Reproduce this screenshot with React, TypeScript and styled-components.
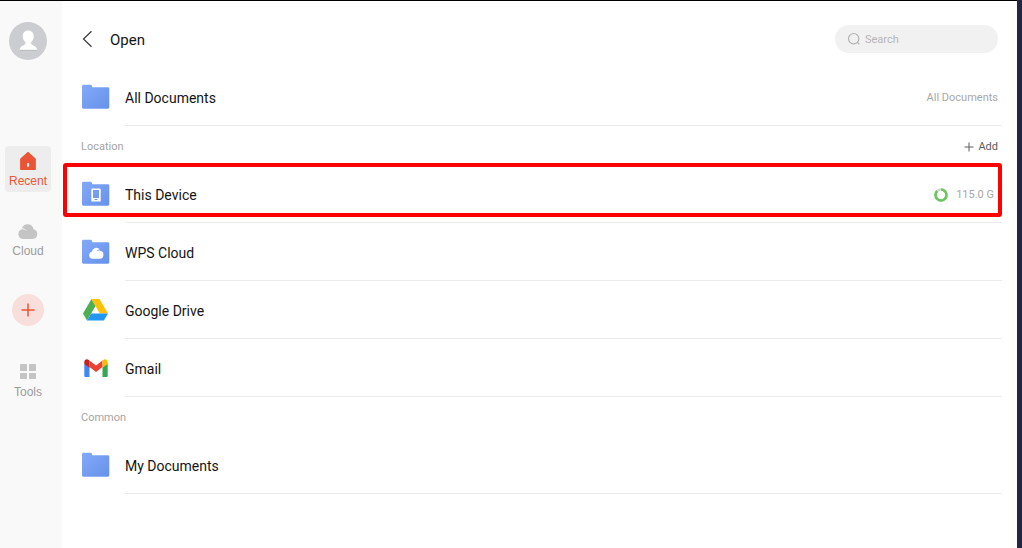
import React from "react";
import styled, { createGlobalStyle } from "styled-components";

const GlobalStyle = createGlobalStyle`
  *, *::before, *::after { box-sizing: border-box; }
  body {
    margin: 0;
    background: #fff;
    color: #141414;
    font-family: Roboto, "Liberation Sans", sans-serif;
    font-size: 14px;
  }
  button, input { font: inherit; color: inherit; }
  button { padding: 0; border: 0; background: none; cursor: pointer; }
  svg { display: block; flex: none; }
`;

const Frame = styled.div`
  min-height: 100vh;
  display: flex;
  border-right: 5px solid #202643;
  background: linear-gradient(#000, #000) top / 100% 1px no-repeat #fff;
  padding-top: 1px;
`;

const Sidebar = styled.nav`
  flex: none;
  width: 62px;
  padding: 21px 11px 0 5px;
  background: #f9f9f9;
  display: flex;
  flex-direction: column;
  align-items: center;
  gap: 24px;
`;

const Avatar = styled.button`
  width: 38px;
  height: 38px;
  margin-bottom: 62px;
`;

const NavItem = styled.button<{ $active?: boolean }>`
  width: 46px;
  height: 46px;
  padding-top: 2px;
  border-radius: 4px;
  display: flex;
  flex-direction: column;
  align-items: center;
  justify-content: center;
  gap: 2px;
  font-family: "Liberation Sans", sans-serif;
  font-size: 12px;
  line-height: 16px;
  background: ${(p) => (p.$active ? "#ededed" : "transparent")};
  color: ${(p) => (p.$active ? "#eb5537" : "#9c9c9c")};
`;

const CreateButton = styled.button`
  width: 32px;
  height: 32px;
  margin: 8px 0 7px;
  border-radius: 50%;
  background: #f8dfdb;
  display: grid;
  place-items: center;
`;

const Main = styled.main`
  flex: 1;
  min-width: 0;
  padding-right: 15px;
`;

const Header = styled.header`
  padding: 24px 4px 15px 20px;
  display: flex;
  align-items: center;
`;

const BackButton = styled.button`
  width: 28px;
`;

const Title = styled.h1`
  margin: 0;
  flex: 1;
  padding-top: 2px;
  font-size: 15px;
  font-weight: 400;
  line-height: 20px;
`;

const SearchBox = styled.label`
  width: 163px;
  height: 28px;
  padding: 0 12px;
  border-radius: 14px;
  background: #f1f1f1;
  color: #b5b5b5;
  display: flex;
  align-items: center;
  gap: 4px;
`;

const SearchInput = styled.input`
  min-width: 0;
  flex: 1;
  padding: 0;
  border: 0;
  outline: 0;
  background: transparent;
  font-size: 11px;
  &::placeholder { color: #b5b5b5; opacity: 1; }
`;

const SectionHead = styled.div`
  height: 39px;
  padding: 2px 4px 0 19px;
  display: flex;
  align-items: center;
  justify-content: space-between;
`;

const SectionTitle = styled.h2`
  margin: 0;
  font-size: 11px;
  font-weight: 400;
  color: #a5a5a5;
`;

const AddButton = styled.button`
  display: flex;
  align-items: center;
  gap: 4px;
  font-size: 11px;
  color: #5c5c5c;
`;

const List = styled.ul`
  margin: 0;
  padding: 0;
  list-style: none;
`;

const Item = styled.li`
  position: relative;
`;

const Row = styled.button`
  width: 100%;
  height: 58px;
  padding-left: 19px;
  display: flex;
  gap: 15px;
  text-align: left;
`;

const IconCell = styled.span`
  width: 29px;
  display: grid;
  place-items: center;
  align-self: center;
`;

const RowBody = styled.span<{ $inset: number }>`
  flex: 1;
  align-self: stretch;
  padding-top: 2px;
  padding-right: ${(p) => p.$inset}px;
  border-bottom: 1px solid #ebebeb;
  display: flex;
  align-items: center;
  justify-content: space-between;
`;

const Meta = styled.span`
  display: flex;
  align-items: center;
  gap: 8px;
  font-size: 11px;
  color: #a8a8a8;
`;

const Highlight = styled.span`
  position: absolute;
  inset: -2px 0 6px 1px;
  border: 4px solid #fe0000;
  border-radius: 3px;
  pointer-events: none;
`;

const Folder = ({ id, children }: { id: string; children?: React.ReactNode }) => (
  <svg width="28" height="26" viewBox="0 0 28 26" aria-hidden="true">
    <defs>
      <linearGradient id={id} x1="0" y1="0" x2="1" y2="1">
        <stop offset="0" stopColor="#84a9fa" />
        <stop offset="1" stopColor="#6692ea" />
      </linearGradient>
    </defs>
    <path
      d="M1.5 .7h7.2c.6 0 1 .4 1.2 1l.5 1.6h15.500c.8 0 1.4.6 1.4 1.4v18.6c0 .8-.6 1.4-1.4 1.4H1.400c-.8 0-1.4-.6-1.400-1.400V2.100c0-.8.6-1.400 1.500-1.400z"
      fill={`url(#${id})`}
    />
    {children}
  </svg>
);

const DeviceFolder = () => (
  <Folder id="folder-device">
    <path
      d="M10.200 7.500h7.600c.5 0 .9.4.9.9v11.300c0 .5-.4.9-.9.9h-7.600c-.5 0-.9-.4-.9-.9V8.400c0-.5.4-.9.9-.9zM11 9v8h6V9zm1.500 9.100v1h3v-1z"
      fill="#fff"
      fillRule="evenodd"
    />
  </Folder>
);

const CloudFolder = () => (
  <Folder id="folder-cloud">
    <path
      d="M10.700 19.700a3.500 3.500 0 0 1-.9-6.900 4.600 4.600 0 0 1 8-2.500c-1.600.2-2.900 1-3.700 2.200 1.300-1 2.800-1.300 4.100-.7a4 4 0 0 1-.3 7.900z"
      fill="#fff"
    />
  </Folder>
);

const DriveIcon = () => (
  <svg width="25" height="22" viewBox="0 0 25 22" aria-hidden="true">
    <path d="M8.500 0 0 14.400 4 21.600 12.500 7z" fill="#4caf50" />
    <path d="M8.500 0h8L25 14.400h-8.200z" fill="#ffc107" />
    <path d="M8.200 14.400H25l-4.200 7.200H4z" fill="#2196f3" />
  </svg>
);

const GmailIcon = () => (
  <svg width="24" height="18" viewBox="0 0 24 18" aria-hidden="true">
    <path d="M.3 4.500 5.500 8v10H1.600C.9 18 .3 17.400.3 16.700z" fill="#4285f4" />
    <path d="M23.700 4.500 18.500 8v10h3.900c.7 0 1.300-.6 1.300-1.300z" fill="#34a853" />
    <path d="M5.500 1.500 12 6.500l6.500-5V8L12 13 5.500 8z" fill="#ea4335" />
    <path d="M.3 2.900v2L5.500 8.800V1.500L4.700.900C2.900-.500.300.700.300 2.900z" fill="#c5221f" />
    <path d="M23.700 2.900v2L18.500 8.800V1.500l.8-.6c1.800-1.400 4.400-.2 4.400 2z" fill="#fbbc04" />
  </svg>
);

const StorageRing = () => (
  <svg width="14" height="14" viewBox="0 0 14 14" aria-hidden="true">
    <circle cx="7" cy="7" r="5.500" fill="none" stroke="#d3d6d3" strokeWidth="2.600" />
    <circle
      cx="7"
      cy="7"
      r="5.500"
      fill="none"
      stroke="#66c95a"
      strokeWidth="2.600"
      pathLength={100}
      strokeDasharray="88 12"
      transform="rotate(-90 7 7)"
    />
  </svg>
);

interface Entry {
  name: string;
  icon: React.ReactNode;
  meta?: React.ReactNode;
  inset?: number;
  highlighted?: boolean;
}

const Entries = ({ items }: { items: Entry[] }) => (
  <List>
    {items.map((e) => (
      <Item key={e.name}>
        <Row type="button">
          <IconCell>{e.icon}</IconCell>
          <RowBody $inset={e.inset ?? 4}>
            <span>{e.name}</span>
            {e.meta && <Meta>{e.meta}</Meta>}
          </RowBody>
        </Row>
        {e.highlighted && <Highlight />}
      </Item>
    ))}
  </List>
);

const top: Entry[] = [
  { name: "All Documents", icon: <Folder id="folder-all" />, meta: "All Documents" },
];

const locations: Entry[] = [
  {
    name: "This Device",
    icon: <DeviceFolder />,
    meta: (
      <>
        <StorageRing />
        115.0 G
      </>
    ),
    inset: 8,
    highlighted: true,
  },
  { name: "WPS Cloud", icon: <CloudFolder /> },
  { name: "Google Drive", icon: <DriveIcon /> },
  { name: "Gmail", icon: <GmailIcon /> },
];

const common: Entry[] = [{ name: "My Documents", icon: <Folder id="folder-my" /> }];

export default function App() {
  return (
    <>
      <GlobalStyle />
      <Frame>
        <Sidebar>
          <Avatar type="button" aria-label="Account">
            <svg width="38" height="38" viewBox="0 0 38 38">
              <circle cx="19" cy="19" r="19" fill="#cbcdd0" />
              <path d="M11 27.800h17v.8H11z" fill="#b3b5b8" />
              <path
                d="M19.200 8.500c3.300 0 5.500 2.400 5.500 5.700 0 2.700-1.100 4.600-2.500 5.900-.5 1.500.2 2.500 1.700 3.200 2.200 1 4 2 4.400 4.500H10.500c.4-2.500 2-3.500 4.200-4.500 1.500-.7 2.200-1.700 1.700-3.200-1.400-1.300-2.700-3.200-2.700-5.900 0-3.300 2.200-5.700 5.500-5.700z"
                fill="#fff"
              />
            </svg>
          </Avatar>
          <NavItem type="button" $active>
            <svg width="18" height="20" viewBox="0 0 18 20" aria-hidden="true">
              <path
                d="M8.300 1.200c.4-.4 1-.4 1.400 0l6.600 6.100c.4.400.6.800.6 1.300v9.700c0 .4-.3.7-.7.7H1.800c-.4 0-.7-.3-.7-.7V8.600c0-.5.2-.9.6-1.300zM8.100 12v3.700h2V12z"
                fill="#eb5537"
                fillRule="evenodd"
              />
            </svg>
            Recent
          </NavItem>
          <NavItem type="button">
            <svg width="20" height="20" viewBox="0 0 20 20" aria-hidden="true">
              <path
                d="M5.300 18A5 5 0 0 1 3.200 8.500c.5-.2 1-.3 1.500-.3C5.800 8.200 8 9 9.500 10.500 8.300 8.400 6.200 7.300 3.900 7.200A6.100 6.100 0 0 1 15.600 8.200 5 5 0 0 1 14.700 18z"
                fill="#c4c4c4"
              />
            </svg>
            Cloud
          </NavItem>
          <CreateButton type="button" aria-label="Create">
            <svg width="14" height="14" viewBox="0 0 14 14">
              <path d="M7 .5v13M.5 7h13" stroke="#eb5537" strokeWidth="1.500" />
            </svg>
          </CreateButton>
          <NavItem type="button">
            <svg width="16" height="20" viewBox="0 0 16 20" aria-hidden="true">
              <g fill="#c4c4c4">
                <rect x="0" y="2" width="7" height="7" rx=".5" />
                <rect x="9" y="2" width="7" height="7" rx=".5" />
                <rect x="0" y="11" width="7" height="6" rx=".5" />
                <rect x="9" y="11" width="7" height="6" rx=".5" />
              </g>
            </svg>
            Tools
          </NavItem>
        </Sidebar>
        <Main>
          <Header>
            <BackButton type="button" aria-label="Back">
              <svg width="12" height="18" viewBox="0 0 12 18">
                <path d="M9.500 1.200 1.500 9l8 7.800" fill="none" stroke="#3a3a3a" strokeWidth="1.200" />
              </svg>
            </BackButton>
            <Title>Open</Title>
            <SearchBox>
              <svg width="14" height="14" viewBox="0 0 14 14" aria-hidden="true">
                <g fill="none" stroke="#b0b0b0" strokeWidth="1.100">
                  <circle cx="6.700" cy="6.700" r="5.200" />
                  <path d="m10.300 10.300 2 2" />
                </g>
              </svg>
              <SearchInput type="text" placeholder="Search" aria-label="Search" />
            </SearchBox>
          </Header>
          <Entries items={top} />
          <SectionHead>
            <SectionTitle>Location</SectionTitle>
            <AddButton type="button">
              <svg width="10" height="10" viewBox="0 0 10 10" aria-hidden="true">
                <path d="M5 .5v9M.5 5h9" stroke="#5c5c5c" strokeWidth="1" />
              </svg>
              Add
            </AddButton>
          </SectionHead>
          <Entries items={locations} />
          <SectionHead>
            <SectionTitle>Common</SectionTitle>
          </SectionHead>
          <Entries items={common} />
        </Main>
      </Frame>
    </>
  );
}
